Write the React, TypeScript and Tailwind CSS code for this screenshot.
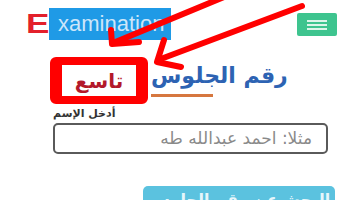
import React from "react";

export default function App() {
  return (
    <div className="relative w-[360px] h-[200px] overflow-hidden bg-white" style={{ fontFamily: '"DejaVu Sans", sans-serif' }}>
      {/* Header */}
      <div className="flex justify-between h-[50px]">
        <div className="flex items-center mt-[8px] ml-[26px] h-[32px]">
          <span className="inline-block w-[23px] text-[27px] leading-none font-bold text-[#e3202b] scale-x-[1.3] origin-left" style={{ fontFamily: '"Liberation Sans", sans-serif' }}>E</span>
          <div className="w-[122px] h-[32px] bg-[#1f9ae6] flex items-center pl-[9px]">
            <span className="text-[22px] leading-none text-[#cde6fa] font-light" style={{ fontFamily: '"Liberation Sans", sans-serif' }}>xamination</span>
          </div>
        </div>
        <div className="mt-[13px] mr-[23px] w-[40px] h-[23px] bg-[#3ec48f] rounded-[2px] flex flex-col justify-center items-center gap-[2px]">
          <div className="w-[20px] h-[2px] bg-[#dcf5ea]" />
          <div className="w-[20px] h-[2px] bg-[#dcf5ea]" />
          <div className="w-[20px] h-[2px] bg-[#dcf5ea]" />
        </div>
      </div>

      {/* Heading row */}
      <div className="flex items-start mt-[7px] pl-[50px]">
        <div className="w-[98px] h-[47px] border-x-[12px] border-y-[8px] border-[#ff0000] rounded-[6px] flex items-center justify-center">
          <span className="text-[20px] leading-none font-bold text-[#b3192b]">تاسع</span>
        </div>
        <div className="ml-[3px] pt-[6px] flex flex-col">
          <span className="text-[22px] leading-[26px] font-bold text-[#2d63b3]">رقم الجلوس</span>
          <div className="mt-[5px] w-[62px] h-[3px] bg-[#d6773f]" />
        </div>
      </div>

      {/* Form */}
      <div className="pl-[53px] pr-[32px] mt-[3px]">
        <div className="text-[11px] leading-[14px] font-bold text-[#333]">أدخل الإسم</div>
        <div className="mt-[2px] h-[31px] border-2 border-[#5a5a5a] rounded-[5px] flex items-center justify-end pr-[14px]">
          <span dir="rtl" className="text-[17px] leading-none text-[#8a8a8a]">مثلا: احمد عبدالله طه</span>
        </div>
      </div>

      <div className="pl-[143px] mt-[32px]">
        <div className="w-[192px] h-[30px] bg-[#5bc2df] rounded-[5px] flex justify-center pt-[6px]">
          <span dir="rtl" className="text-[16px] leading-none font-bold text-[#e6f6fb]">البحث عن رقم الجلوس</span>
        </div>
      </div>

      {/* Annotation arrows */}
      <svg className="absolute inset-0 pointer-events-none" width="360" height="200" viewBox="0 0 360 200">
        <g stroke="#ff0000" strokeWidth="6" strokeLinecap="round" strokeLinejoin="round" fill="none">
          <line x1="113" y1="43" x2="224" y2="-3" />
          <polyline points="111,30 112,44 139,42" />
          <line x1="158" y1="60" x2="302" y2="6" />
          <polyline points="164,40 157,62 181,67" />
        </g>
      </svg>
    </div>
  );
}
